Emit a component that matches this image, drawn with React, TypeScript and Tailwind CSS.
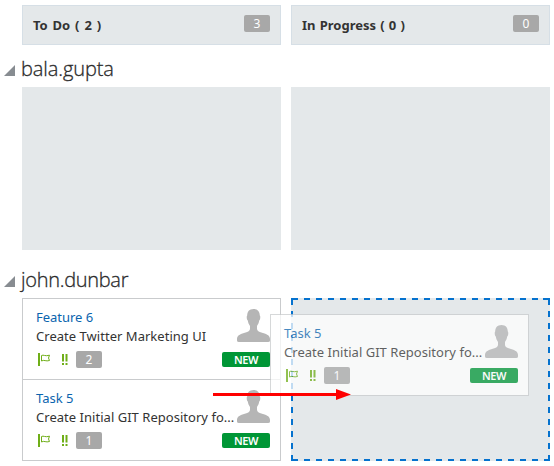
function Badge({ n }: { n: number }) {
  return (
    <span className="flex h-[17px] w-[26px] items-center justify-center rounded-[2px] bg-[#a8a8a8] text-[12px] leading-[17px] text-white">
      {n}
    </span>
  );
}

function Header({ title, spacing, count }: { title: string; spacing: string; count: number }) {
  return (
    <div className="flex h-10 w-[259px] justify-between border border-[#d6dfe6] bg-[#e4e8ea] pl-[10px] pr-[10px] pt-[9px]">
      <span className={`-mt-px text-[13px] font-bold leading-[22px] text-[#333] ${spacing}`}>{title}</span>
      <Badge n={count} />
    </div>
  );
}

function LaneTitle({ name, spacing }: { name: string; spacing: string }) {
  return (
    <div className="flex h-[30px] items-center">
      <svg width="11" height="11" className="ml-1 mt-[2px] shrink-0"><path d="M0 11 11 0V11Z" fill="#878c91" /></svg>
      <h2 className={`font-['Open_Sans',sans-serif] text-[20px] font-light leading-[30px] text-[#2a2a2a] [-webkit-text-stroke:0.3px_#2a2a2a] ${spacing}`}>{name}</h2>
    </div>
  );
}

function Person() {
  return (
    <svg width="33" height="33" viewBox="0 0 33 33" className="shrink-0">
      <path d="M16.5 0C12.3 0 10.2 2.8 10.2 6.5C9.4 7 9.6 10.5 10.8 11.5C11.2 14 12 15.5 13 17V20C13 22 10.5 23 7 24C2.5 25.2 0 27 0 30V31.5Q0 33 2 33H31Q33 33 33 31.5V30C33 27 30.5 25.2 26 24C22.5 23 20 22 20 20V17C21 15.5 21.8 14 22.2 11.5C23.4 10.5 23.6 7 22.8 6.5C22.8 2.8 20.7 0 16.5 0Z" fill="#b5b5b5" />
    </svg>
  );
}

function Card({ title, text, count }: { title: string; text: string; count: number }) {
  return (
    <div className="flex h-[82px] w-[259px] justify-between border border-[#c9cbcd] bg-white pl-[13px] pr-[10px]">
      <div className="pt-[9px]">
        <div className="h-[19px] whitespace-nowrap text-[13px] leading-[19px] tracking-[-0.02px] text-[#0a64ae]">{title}</div>
        <div className="h-[19px] w-[201px] whitespace-nowrap text-[13px] leading-[19px] tracking-[0.03px] text-[#333]">{text}</div>
        <div className="mt-[5px] flex items-center">
          <svg width="14" height="13" className="ml-[2px]" fill="none">
            <path d="M1 0V13" stroke="#6fae18" strokeWidth="2" />
            <path d="M3.5 2.5C5.5 1.3 7 3.7 11.5 2.2L10.5 5L11.5 7.5C8 8.8 6 6.3 3.5 8Z" stroke="#6fae18" />
          </svg>
          <svg width="6" height="11" className="ml-[10px]" fill="#6fae18">
            <path d="M0 0H2V7.5H0ZM3.5 0H5.5V7.5H3.5ZM0 9H2V11H0ZM3.5 9H5.5V11H3.5Z" />
          </svg>
          <span className="ml-2"><Badge n={count} /></span>
        </div>
      </div>
      <div className="-ml-4 flex w-12 shrink-0 flex-col items-end pt-[10px]">
        <Person />
        <span className="mt-[10px] flex h-[15px] w-12 items-center justify-center rounded-[2px] bg-[#009636] text-[11px] font-semibold leading-[15px] tracking-[-0.4px] text-white">NEW</span>
      </div>
    </div>
  );
}

export default function App() {
  return (
    <main className="relative h-[466px] w-[554px] overflow-hidden bg-white pt-[5px] font-['Noto_Sans',sans-serif]">
      <div className="ml-[22px] flex gap-[10px]">
        <Header title="To Do ( 2 )" spacing="[word-spacing:1.5px]" count={3} />
        <Header title="In Progress ( 0 )" spacing="[word-spacing:0.8px]" count={0} />
      </div>
      <div className="mt-[9px]"><LaneTitle name="bala.gupta" spacing="ml-[6px] tracking-[-0.1px]" /></div>
      <div className="ml-[22px] mt-[3px] flex gap-[10px]">
        <div className="h-[163px] w-[259px] bg-[#e4e8ea]" />
        <div className="h-[163px] w-[259px] bg-[#e4e8ea]" />
      </div>
      <div className="mt-[15px]"><LaneTitle name="john.dunbar" spacing="ml-[6px] tracking-[-0.3px]" /></div>
      <div className="ml-[22px] mt-[3px] flex gap-[10px]">
        <div className="w-[259px]">
          <Card title="Feature 6" text="Create Twitter Marketing UI" count={2} />
          <div className="-mt-px"><Card title="Task 5" text="Create Initial GIT Repository fo..." count={1} /></div>
        </div>
        <div className="h-[163px] w-[259px] bg-[#e4e8ea]">
          <svg width="259" height="163" stroke="#0572ce" strokeWidth="2" strokeDasharray="6 6">
            <path d="M259 1H0M259 162H0M1 163V0M258 163V0" />
            <path d="M0 1H7M252 1H259M0 162H7M1 0V7M258 0V7" strokeDasharray="none" />
          </svg>
        </div>
      </div>
      <div className="absolute left-[270px] top-[314px] opacity-75">
        <Card title="Task 5" text="Create Initial GIT Repository fo..." count={1} />
      </div>
      <svg className="absolute left-[213px] top-[388px]" width="140" height="13" fill="#f00">
        <path d="M0 5H123V1L138 6.5L123 12V8H0Z" />
      </svg>
    </main>
  );
}
